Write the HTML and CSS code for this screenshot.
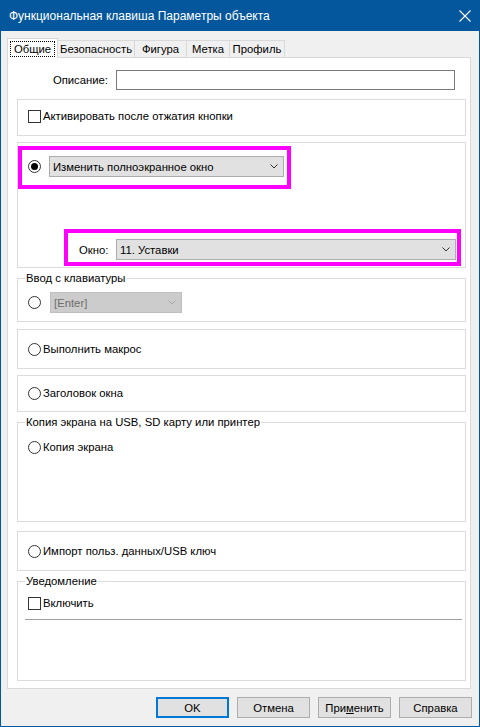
FILE: index.html
```html
<!DOCTYPE html>
<html lang="ru">
<head>
    <meta charset="UTF-8">
    <meta name="viewport" content="width=device-width, initial-scale=1.0">
    <title>Функциональная клавиша Параметры объекта</title>
    <link rel="stylesheet" href="styles.css">
</head>
<body>
    <div class="window">
        <div class="titlebar">
            <span class="title">Функциональная клавиша Параметры объекта</span>
            <svg class="close" width="12" height="12" viewBox="0 0 12 12">
                <path d="M0.5 0.5 L11.5 11.5 M11.5 0.5 L0.5 11.5" stroke="#fff" stroke-width="1.1" fill="none"/>
            </svg>
        </div>

        <div class="content">
            <div class="tabs">
                <div class="tab active"><span class="focus">Общие</span></div>
                <div class="tab tab-security">Безопасность</div>
                <div class="tab tab-shape">Фигура</div>
                <div class="tab tab-label">Метка</div>
                <div class="tab tab-profile">Профиль</div>
            </div>

            <div class="panel">
                <div class="desc-row">
                    <span class="desc-label">Описание:</span>
                    <div class="textbox"></div>
                </div>

                <div class="group g1">
                    <div class="row"><span class="check"></span><span>Активировать после отжатия кнопки</span></div>
                </div>

                <div class="group g2">
                    <div class="mark mark1">
                        <span class="radio on"></span>
                        <div class="combo combo-screen">
                            <span>Изменить полноэкранное окно</span>
                            <svg class="chev" width="8" height="5" viewBox="0 0 8 5"><path d="M0.5 0.5 L4 4 L7.5 0.5" stroke="#333" fill="none"/></svg>
                        </div>
                    </div>
                    <div class="mark mark2">
                        <span class="combo-label">Окно:</span>
                        <div class="combo combo-window">
                            <span>11. Уставки</span>
                            <svg class="chev" width="8" height="5" viewBox="0 0 8 5"><path d="M0.5 0.5 L4 4 L7.5 0.5" stroke="#333" fill="none"/></svg>
                        </div>
                    </div>
                </div>

                <div class="group g3">
                    <span class="legend">Ввод с клавиатуры</span>
                    <div class="row key-row">
                        <span class="radio"></span>
                        <div class="combo disabled combo-key">
                            <span>[Enter]</span>
                            <svg class="chev" width="8" height="5" viewBox="0 0 8 5"><path d="M0.5 0.5 L4 4 L7.5 0.5" stroke="#a8a8a8" fill="none"/></svg>
                        </div>
                    </div>
                </div>

                <div class="group g4">
                    <div class="row"><span class="radio"></span><span>Выполнить макрос</span></div>
                </div>

                <div class="group g5">
                    <div class="row"><span class="radio"></span><span>Заголовок окна</span></div>
                </div>

                <div class="group g6">
                    <span class="legend">Копия экрана на USB, SD карту или принтер</span>
                    <div class="row"><span class="radio"></span><span>Копия экрана</span></div>
                </div>

                <div class="group g7">
                    <div class="row"><span class="radio"></span><span>Импорт польз. данных/USB ключ</span></div>
                </div>

                <div class="group g8">
                    <span class="legend">Уведомление</span>
                    <div class="row"><span class="check"></span><span>Включить</span></div>
                    <div class="rule"></div>
                </div>
            </div>

            <div class="buttons">
                <div class="btn default">OK</div>
                <div class="btn">Отмена</div>
                <div class="btn">При<u>м</u>енить</div>
                <div class="btn">Справка</div>
            </div>
        </div>
    </div>
</body>
</html>
```

FILE: styles.css
```css
* {
    box-sizing: border-box;
}
body {
    margin: 0;
    background-color: #f0f0f0;
    font-family: "Liberation Sans", Arial, sans-serif;
    font-size: 11.3px;
    color: #000;
}
.window {
    width: 480px;
    height: 727px;
    border: 1px solid #04579c;
    border-top: none;
    background-color: #f0f0f0;
}
.titlebar {
    height: 31px;
    background-color: #04579c;
    color: #fff;
    display: flex;
    align-items: center;
    justify-content: space-between;
    padding: 0 8px 0 8px;
}
.title {
    font-size: 12px;
    padding-top: 1px;
}
.close {
    margin-top: 1px;
}
.content {
    padding: 7px 8px 0 6px;
}

/* tabs */
.tabs {
    display: flex;
    align-items: flex-end;
    height: 19px;
}
.tab {
    height: 17px;
    border: 1px solid #d9d9d9;
    border-bottom: none;
    margin-left: -1px;
    line-height: 16px;
    text-align: center;
    white-space: nowrap;
    background-color: #f0f0f0;
}
.tab-security {
    width: 78px;
}
.tab-shape {
    width: 53px;
}
.tab-label {
    width: 44px;
}
.tab-profile {
    width: 56px;
}
.tab.active {
    width: 51px;
    height: 20px;
    margin-left: 0;
    margin-bottom: -1px;
    background-color: #fff;
    padding-top: 2px;
    position: relative;
    z-index: 1;
}
.focus {
    display: inline-block;
    border: 1px dotted #000;
    padding: 0 3px;
    line-height: 14px;
}

/* panel */
.panel {
    background-color: #fff;
    border: 1px solid #d9d9d9;
    padding: 0 4px 7px 9px;
}
.desc-row {
    display: flex;
    align-items: center;
    margin-top: 12px;
    margin-left: -9px;
}
.desc-label {
    width: 100px;
    text-align: right;
    margin-right: 8px;
}
.textbox {
    width: 339px;
    height: 20px;
    border: 1px solid #7a7a7a;
    background-color: #fff;
}
.group {
    border: 1px solid #dcdcdc;
}
.legend {
    display: block;
    width: fit-content;
    margin: -8px 0 0 7px;
    padding: 0 1px;
    line-height: 15px;
    background-color: #fff;
}
.row {
    display: flex;
    align-items: center;
    height: 16px;
    padding-left: 10px;
}
.check,
.radio {
    width: 13px;
    height: 13px;
    border: 1px solid #333;
    background-color: #fff;
    margin-right: 2px;
    flex-shrink: 0;
}
.radio {
    border-radius: 50%;
    display: grid;
    place-items: center;
}
.radio.on::after {
    content: '';
    width: 7px;
    height: 7px;
    border-radius: 50%;
    background-color: #000;
}

.g1 {
    margin-top: 9px;
    height: 37px;
    padding-top: 8px;
}
.g2 {
    margin-top: 6px;
    height: 126px;
}
.g3 {
    margin-top: 10px;
    height: 44px;
}
.g4 {
    margin-top: 7px;
    height: 40px;
    padding-top: 11px;
}
.g5 {
    margin-top: 6px;
    height: 37px;
    padding-top: 9px;
}
.g6 {
    margin-top: 10px;
    height: 100px;
}
.g6 .row {
    margin-top: 9px;
}
.g7 {
    margin-top: 9px;
    height: 40px;
    padding-top: 11px;
}
.g8 {
    margin-top: 10px;
    height: 100px;
}
.g8 .row {
    margin-top: 6px;
}
.rule {
    height: 1px;
    background-color: #a0a0a0;
    margin: 8px 3px 0 7px;
}

/* magenta marks */
.mark {
    border: 4px solid #ff00ff;
    display: flex;
    align-items: center;
}
.mark1 {
    width: 273px;
    height: 43px;
    margin-top: 3px;
    padding: 6px 3px 8px 6px;
}
.mark1 .radio {
    margin-right: 8px;
}
.mark2 {
    width: 397px;
    height: 37px;
    margin: 40px 0 0 46px;
    padding: 6px 1px 2px 11px;
}
.combo-label {
    width: 37px;
}

/* combo boxes */
.combo {
    height: 21px;
    background-color: #e1e1e1;
    border: 1px solid #adadad;
    display: flex;
    align-items: center;
    justify-content: space-between;
    padding: 0 5px 0 3px;
}
.combo-screen {
    width: 235px;
}
.combo-window {
    width: 340px;
}
.key-row {
    height: 21px;
    margin-top: 6px;
}
.key-row .radio {
    margin-right: 9px;
}
.combo-key {
    width: 132px;
}
.combo.disabled {
    background-color: #cccccc;
    border-color: #bfbfbf;
    color: #6d6d6d;
}

/* buttons */
.buttons {
    display: flex;
    justify-content: flex-end;
    gap: 8px;
    margin-top: 8px;
    margin-right: -1px;
}
.btn {
    width: 73px;
    height: 21px;
    background-color: #e1e1e1;
    border: 1px solid #adadad;
    display: flex;
    align-items: center;
    justify-content: center;
}
.btn.default {
    border: 2px solid #0078d7;
}
.btn u {
    text-decoration: underline;
}
```
